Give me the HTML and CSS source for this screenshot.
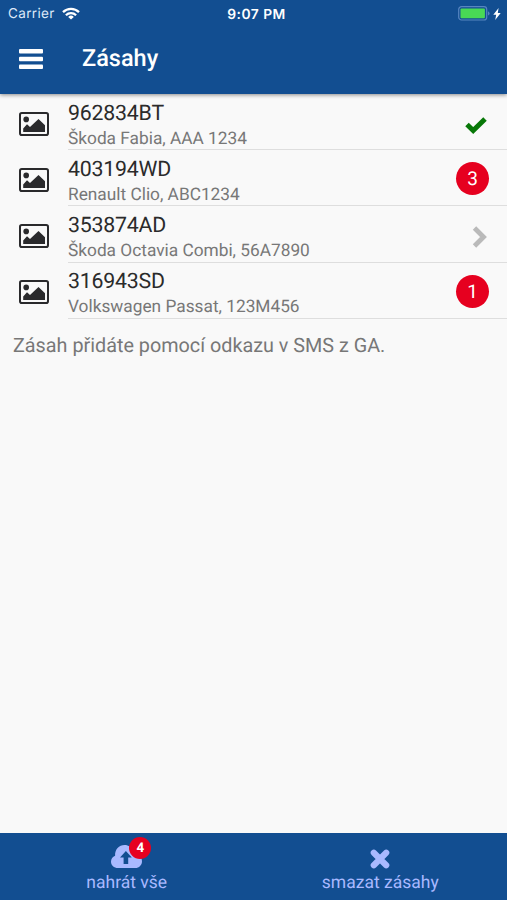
FILE: index.html
```html
<!DOCTYPE html>
<html lang="cs">
<head>
<meta charset="utf-8">
<title>Zásahy</title>
<link rel="stylesheet" href="styles.css">
</head>
<body>
<svg class="defs" width="0" height="0" aria-hidden="true">
  <symbol id="picture" viewBox="0 0 30 24">
    <rect x="1" y="1" width="28" height="22" rx="1.8" fill="none" stroke="currentColor" stroke-width="2"/>
    <circle cx="7.200" cy="7.400" r="2.800" fill="currentColor"/>
    <path d="M4.200 20v-3.400l3.800-4.300 3 2.700 8.500-8 6.500 6.300V20z" fill="currentColor"/>
  </symbol>
</svg>
<div class="app">
  <header class="header">
    <div class="status">
      <div class="carrier"><span>Carrier</span>
        <svg class="wifi" viewBox="0 0 18 13"><g fill="none" stroke="#fff" stroke-width="2.300"><path d="M1 5.200a11.500 11.500 0 0 1 16 0"/><path d="M3.900 8.300a7.300 7.300 0 0 1 10.200 0"/></g><path d="M9 12.600 6.200 9.900a4 4 0 0 1 5.600 0z" fill="#fff"/></svg>
      </div>
      <time class="clock">9:07 PM</time>
      <div class="power">
        <svg class="battery" viewBox="0 0 32 15"><rect x=".7" y=".7" width="28" height="13.300" rx="2.800" fill="none" stroke="#5785c0" stroke-width="1.200"/><rect x="2.500" y="2.500" width="24.400" height="9.700" rx="1" fill="#49d955"/><path d="M30 5.200q1.600.8 1.600 2.200T30 9.600z" fill="#5785c0"/></svg>
        <svg class="bolt" viewBox="0 0 8 12"><path d="M5.600 0 .3 6.700h2.900L2.200 12 7.700 4.900H4.800z" fill="#fff"/></svg>
      </div>
    </div>
    <div class="toolbar">
      <svg class="menu" viewBox="0 0 24 20"><g fill="#fff"><rect width="24" height="4.400" rx="1"/><rect y="7.800" width="24" height="4.400" rx="1"/><rect y="15.600" width="24" height="4.400" rx="1"/></g></svg>
      <h1>Zásahy</h1>
    </div>
  </header>
  <main>
    <ul class="list">
      <li><svg class="picture"><use href="#picture"/></svg><div class="item"><div><h2>962834BT</h2><p>Škoda Fabia, AAA 1234</p></div><svg class="check" viewBox="0 0 22 18"><path d="m2 8.500 6.200 6L20 3" fill="none" stroke="#087808" stroke-width="5"/></svg></div></li>
      <li><svg class="picture"><use href="#picture"/></svg><div class="item"><div><h2>403194WD</h2><p>Renault Clio, ABC1234</p></div><span class="count">3</span></div></li>
      <li><svg class="picture"><use href="#picture"/></svg><div class="item"><div><h2>353874AD</h2><p>Škoda Octavia Combi, 56A7890</p></div><svg class="chevron" viewBox="0 0 16 22"><path d="m2.500 2 9 9-9 9" fill="none" stroke="#bababa" stroke-width="4.800"/></svg></div></li>
      <li><svg class="picture"><use href="#picture"/></svg><div class="item"><div><h2>316943SD</h2><p>Volkswagen Passat, 123M456</p></div><span class="count">1</span></div></li>
    </ul>
    <p class="hint">Zásah přidáte pomocí odkazu v SMS z GA.</p>
  </main>
  <footer>
    <div class="action">
      <span class="upload"><svg class="cloud" viewBox="0 0 31 23"><path d="M7 23C3 23 0 20.200 0 16.700c0-2.800 1.600-5 4.100-6C3.700 4.500 8 0 13.600 0c4 0 7 2.200 8.200 5.600 3.200-1 6.200 1.300 5.600 4.900 2.300.8 3.600 3.100 3.600 5.700 0 3.900-2.900 6.800-6.600 6.800z" fill="#a9b9ff"/><path d="M14.900 6 9 12.500h3.600V19h4.600v-6.500h3.600z" fill="#124e91"/></svg><span class="badge">4</span></span>
      <span class="label">nahrát vše</span>
    </div>
    <div class="action">
      <svg class="cross" viewBox="0 0 20 20"><path d="m3.800 3.800 12.400 12.400m0-12.400L3.800 16.200" stroke="#a9b9ff" stroke-width="6.200" stroke-linecap="round"/></svg>
      <span class="label delete">smazat zásahy</span>
    </div>
  </footer>
</div>
</body>
</html>
```
FILE: styles.css
```css
* { box-sizing: border-box; }
body, h1, h2, p, ul { margin: 0; padding: 0; }
body { font-family: Roboto, sans-serif; background: #f9f9f9; text-rendering: geometricPrecision; }
.defs { position: absolute; }
svg { display: block; flex: none; }
.app { height: 900px; display: flex; flex-direction: column; }
.header { height: 94px; background: #124e91; color: #fff; box-shadow: 0 1px 4px rgba(0,0,0,.45); }
.status { height: 27px; display: grid; grid-template-columns: 1fr auto 1fr; align-items: center; padding: 0 6px 0 8px; font: 13.5px Inter, sans-serif; }
.carrier { display: flex; align-items: center; gap: 7px; letter-spacing: .35px; color: #dce8f8; }
.carrier span { padding-top: 1px; }
.wifi { width: 18px; height: 13px; }
.clock { font-weight: 600; font-size: 13.8px; letter-spacing: .5px; padding: 2px 0 0 4px; }
.power { display: flex; justify-content: flex-end; align-items: center; gap: 3px; }
.battery { width: 32px; height: 15px; }
.bolt { width: 8px; height: 12px; }
.toolbar { height: 64px; display: flex; align-items: center; padding-left: 19px; gap: 39px; }
.menu { width: 24px; height: 20px; }
.toolbar h1 { font-size: 23.5px; font-weight: 500; line-height: 28px; padding-bottom: 3px; }
main { flex: 1; }
.list { list-style: none; }
.list li { height: 56.2px; display: flex; align-items: center; padding-left: 19px; }
.picture { width: 30px; height: 24px; color: #2a2a2c; margin-top: 3px; }
.item { flex: 1; height: 100%; margin-left: 19px; padding: 7px 18px 0 0; border-bottom: 1px solid #dedede; display: flex; justify-content: space-between; }
h2 { font-size: 21.3px; font-weight: 400; line-height: 24px; letter-spacing: -.2px; color: #2b2b2b; margin-top: .8px; }
.item p { font-size: 17.3px; line-height: 24px; color: #777; margin-top: 1px; }
.check { width: 22px; height: 18px; margin: 15px 2px 0 0; }
.chevron { width: 16px; height: 22px; margin: 13px 1px 0 0; }
.count { width: 33px; height: 33px; border-radius: 50%; margin-top: 5px; background: #e6001f; color: #fff; font-size: 19px; line-height: 33px; text-align: center; }
.hint { padding: 14px 13px 0; font-size: 19.8px; line-height: 26px; color: #777; }
footer { height: 67px; background: #124e91; display: flex; }
.action { flex: 1; display: flex; flex-direction: column; align-items: center; color: #a9b9ff; }
.upload { position: relative; margin-top: 12px; }
.cloud { width: 31px; height: 23px; }
.badge { position: absolute; left: 18px; top: -8px; width: 22px; height: 22px; border-radius: 50%; background: #e6001f; color: #fff; font-size: 13.5px; font-weight: 700; line-height: 23px; text-align: center; }
.cross { width: 20px; height: 20px; margin: 16px 0 0; }
.label { font-size: 17.5px; line-height: 22px; margin-top: 4px; }
.label.delete { margin-top: 3px; }
```
